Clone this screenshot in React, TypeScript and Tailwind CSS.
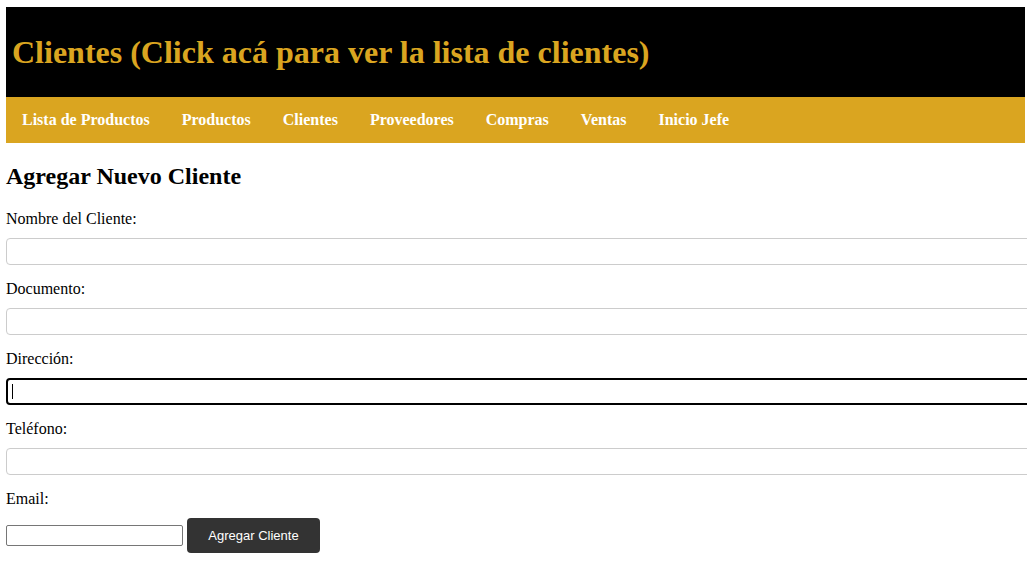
const links = ['Lista de Productos', 'Productos', 'Clientes', 'Proveedores', 'Compras', 'Ventas', 'Inicio Jefe']

const fields = ['Nombre del Cliente:', 'Documento:', 'Dirección:', 'Teléfono:']

export default function App() {
  return (
    <div className="w-[1027px] h-[569px] overflow-hidden bg-white font-['Liberation_Serif',serif] text-black">
      <div className="pl-[6px] pt-[7px]">
        {/* Header */}
        <header className="w-[1019px] bg-black h-[90px] flex items-center px-[6px]">
          <h1 className="text-[32px] leading-[37px] font-bold text-[#DAA520]">
            Clientes (Click acá para ver la lista de clientes)
          </h1>
        </header>

        {/* Nav */}
        <nav className="w-[1019px] bg-[#DAA520] flex">
          {links.map((l) => (
            <a key={l} href="#" className="px-4 h-[46px] flex items-center text-white font-bold text-[16px]">
              {l}
            </a>
          ))}
        </nav>

        {/* Form */}
        <h2 className="text-[24px] leading-[28px] font-bold mt-[19px] mb-[20px]">Agregar Nuevo Cliente</h2>
        <form className="flex flex-col">
          {fields.map((f, i) => (
            <div key={f} className="flex flex-col">
              <label className="text-[16px] leading-[18px]">{f}</label>
              {i === 2 ? (
                <div className="mt-[10px] mb-[15px] w-[1040px] h-[27px] rounded-[4px] border-2 border-black flex items-center pl-[4px]">
                  <span className="w-px h-[15px] bg-black" />
                </div>
              ) : (
                <input
                  type="text"
                  className="mt-[10px] mb-[15px] w-[1040px] h-[27px] rounded-[4px] border border-[#ccc] outline-none"
                />
              )}
            </div>
          ))}
          <label className="text-[16px] leading-[18px]">Email:</label>
          <div className="flex items-center mt-[10px]">
            <input
              type="email"
              className="w-[177px] h-[21px] border border-[#767676] outline-none rounded-[2px]"
            />
            <button
              type="button"
              className="ml-[4px] h-[35px] w-[133px] bg-[#333] text-white rounded-[4px] text-[13px] font-['Liberation_Sans',Arial,sans-serif]"
            >
              Agregar Cliente
            </button>
          </div>
        </form>
      </div>
    </div>
  )
}
